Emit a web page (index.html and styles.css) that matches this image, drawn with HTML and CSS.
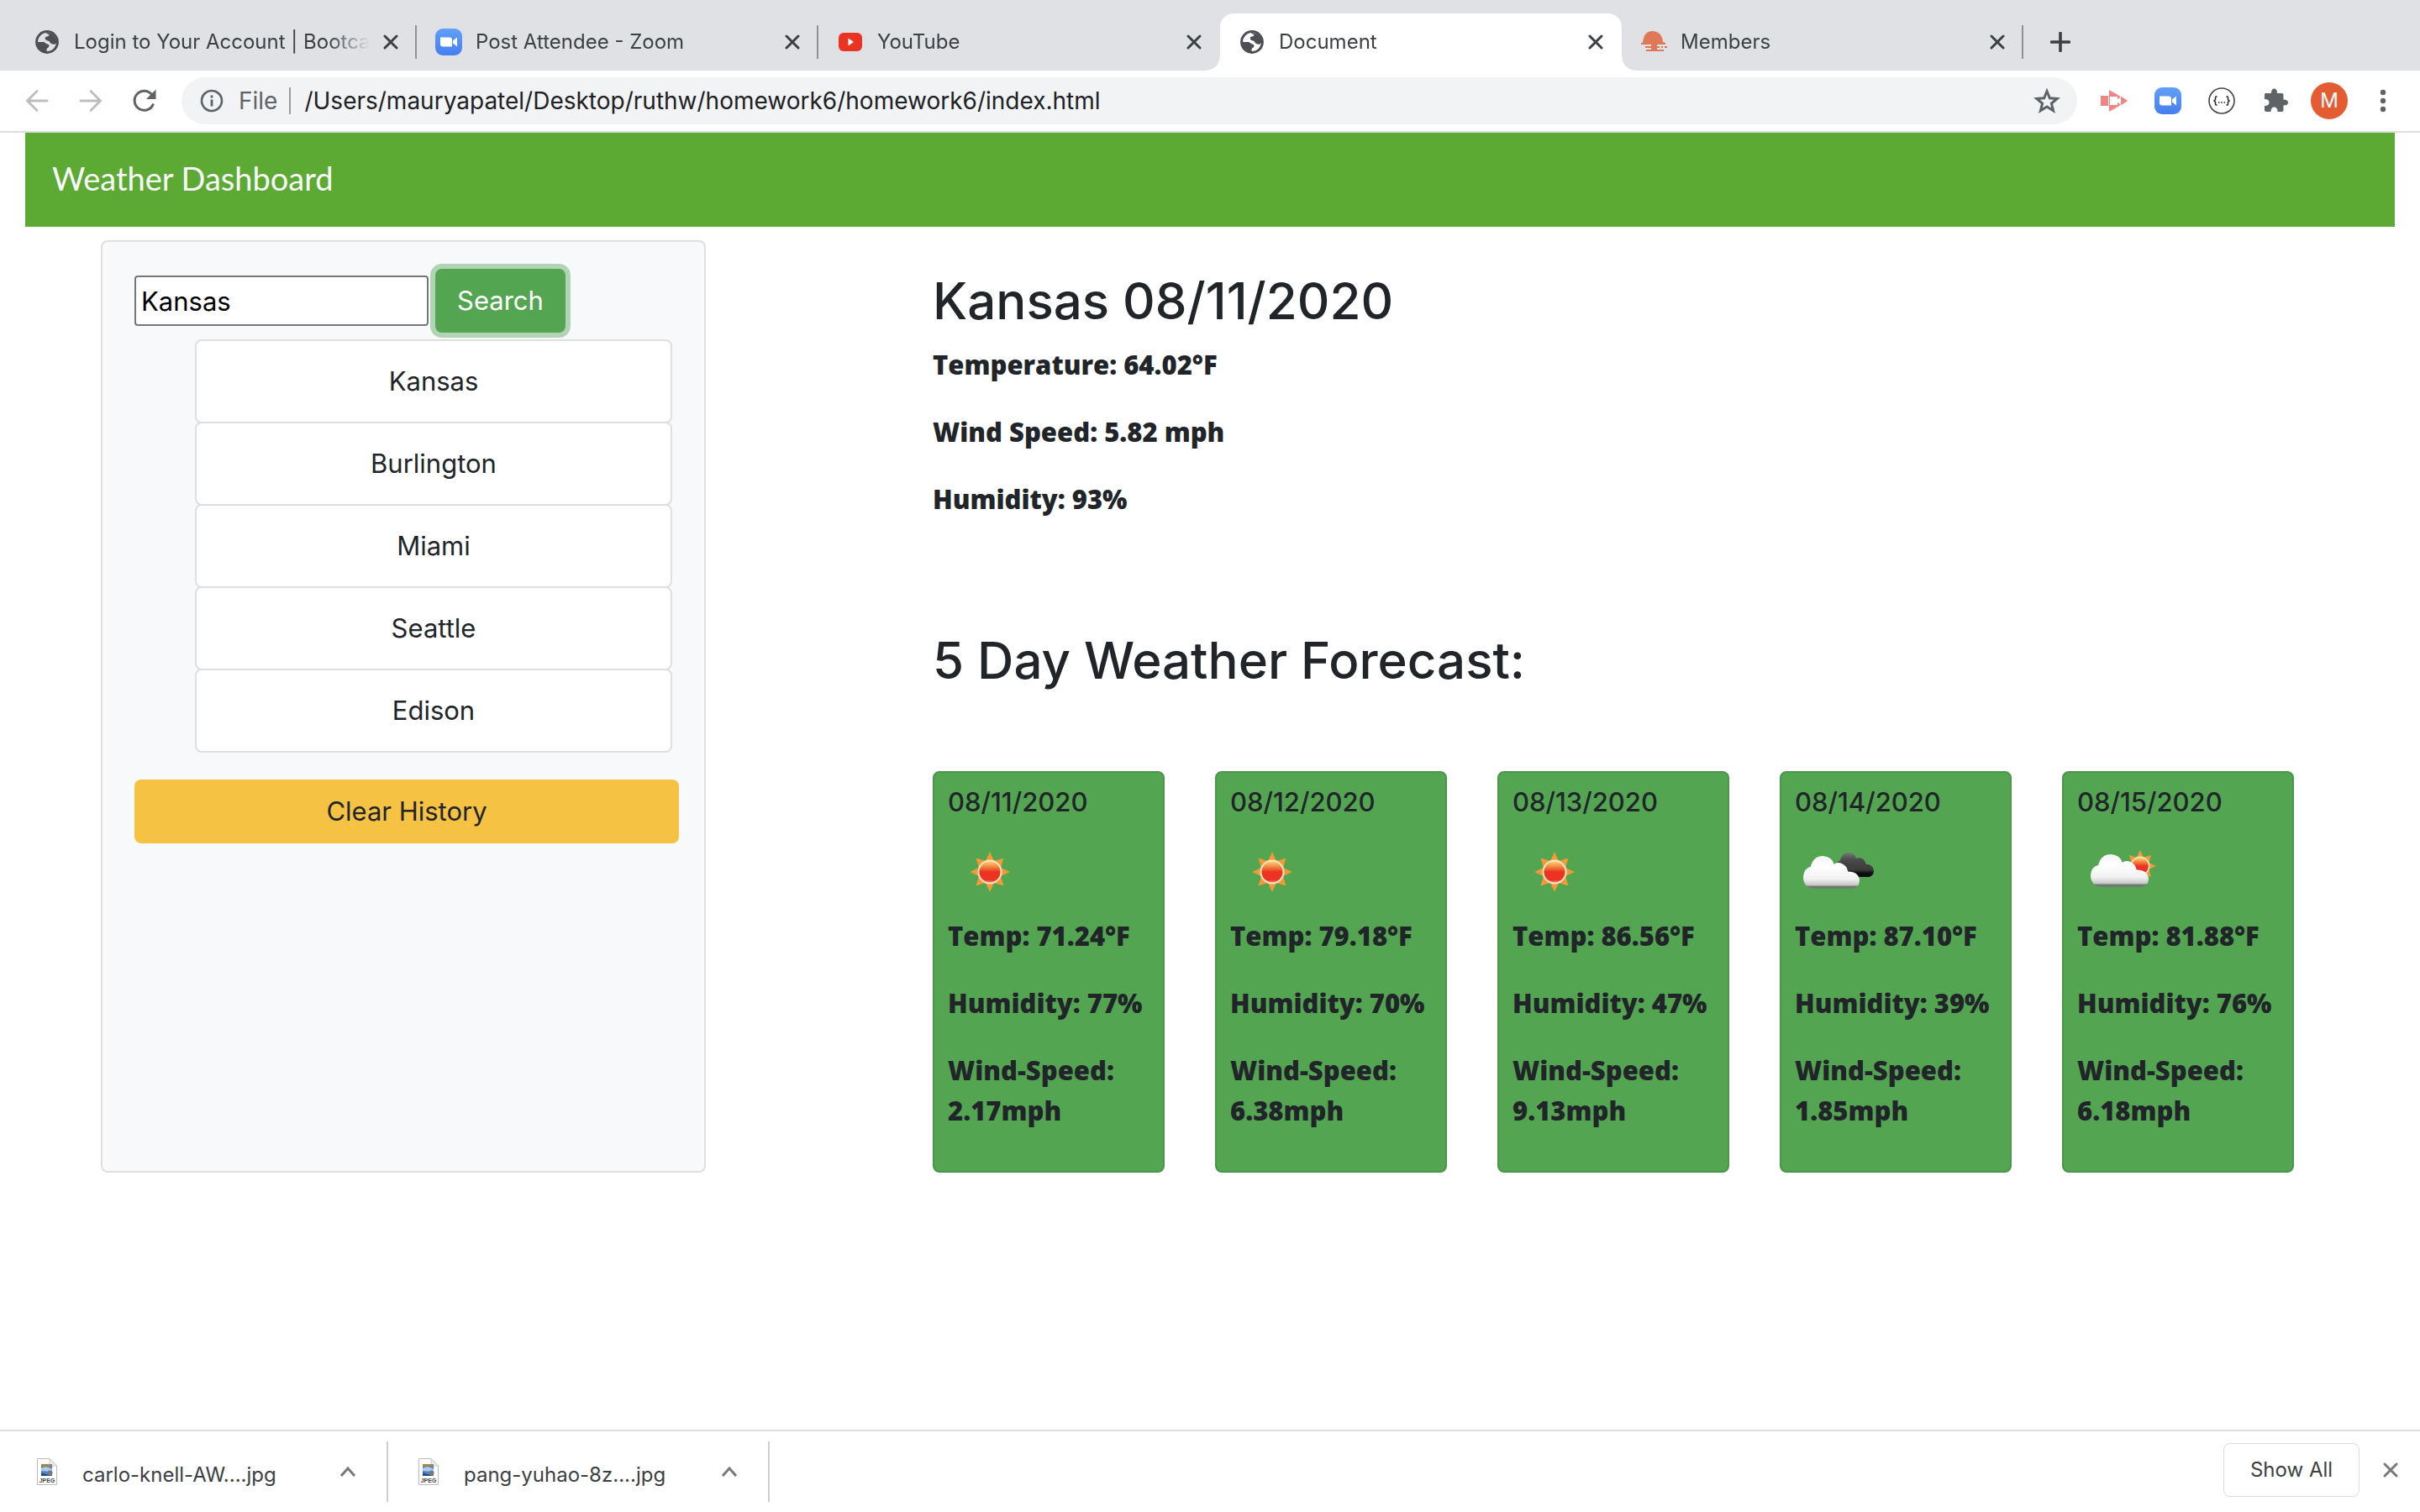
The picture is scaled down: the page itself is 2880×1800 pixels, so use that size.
FILE: index.html
```html
<!DOCTYPE html>
<html lang="en">
<head>
<meta charset="utf-8">
<title>Document</title>
<link rel="stylesheet" href="styles.css">
</head>
<body>
<svg class="defs" aria-hidden="true">
  <defs>
    <linearGradient id="zoomBlue" x1="0" y1="0" x2="0" y2="1"><stop offset="0" stop-color="#61a0f8"/><stop offset="1" stop-color="#467ef0"/></linearGradient>
    <linearGradient id="sunCore" x1="0" y1="0" x2="0" y2="1"><stop offset="0" stop-color="#fbe27a"/><stop offset=".4" stop-color="#ee5a2a"/><stop offset=".5" stop-color="#eb3223"/><stop offset=".85" stop-color="#eb3223"/><stop offset="1" stop-color="#f49a9a"/></linearGradient>
    <linearGradient id="whiteCloud" x1="0" y1="0" x2="0" y2="1"><stop offset="0" stop-color="#f4f4f4"/><stop offset=".3" stop-color="#fff"/><stop offset=".7" stop-color="#f1f1f1"/><stop offset=".9" stop-color="#c6c6c6"/><stop offset=".92" stop-color="#6f7a70"/><stop offset="1" stop-color="#6f7a70"/></linearGradient>
    <linearGradient id="darkCloud" x1="0" y1="0" x2="0" y2="1"><stop offset="0" stop-color="#777"/><stop offset=".3" stop-color="#4a4a4a"/><stop offset=".7" stop-color="#3c3c3c"/><stop offset=".85" stop-color="#0c0c0c"/><stop offset="1" stop-color="#0c0c0c"/></linearGradient>
    <symbol id="globe" viewBox="0 0 28 28"><circle cx="14" cy="14" r="12.4" fill="none" stroke="#4d4f54" stroke-width="3"/><path fill="#4d4f54" d="M13 3.500C17 2 24 5 25.500 13C25 18 21 17 19 16C17 15 17.500 13 15 12.500C12.500 12 11 10.500 12 8.500C13 7 15.500 8 16.500 6C16.500 4.500 14 5 13 3.500ZM2 14H9C12 14 12 16 14.500 16.500C16.500 17 17 18 16 20C15 21.500 13.500 21 13.500 23V26C7 26 2 21 2 14Z"/></symbol>
    <symbol id="camera" viewBox="0 0 32 32"><rect width="32" height="32" rx="9" fill="url(#zoomBlue)"/><path fill="#fff" d="M6 10.500h11q3 0 3 3V21.500H9q-3 0-3-3ZM21 14.500l5-4V21.500l-5-4Z"/></symbol>
    <symbol id="cross" viewBox="0 0 18 18"><path d="M2 2L16 16M16 2L2 16" fill="none" stroke="currentColor" stroke-width="3" stroke-linecap="round"/></symbol>
    <symbol id="caret" viewBox="0 0 20 14"><path d="M2 12L10 3L18 12" fill="none" stroke="currentColor" stroke-width="3"/></symbol>
    <symbol id="jpeg" viewBox="0 0 24 32"><path d="M.5.500H15L23.500 9V31.500H.5Z" fill="#fff" stroke="#bbb"/><path d="M15 .500V9H23.500Z" fill="#ececec" stroke="#ccc"/><path d="M5 7h13v14H5Z" fill="#4f86c9"/><path d="M5 7h12v3H5Z" fill="#a98245"/><path d="M5 12q6-4 13 1v3l-13-1Z" fill="#a9cdf0"/><path d="M5 17l13 4H5Z" fill="#284d85"/><circle cx="15.500" cy="17.500" r="3" fill="#77797c"/><text x="12" y="29" text-anchor="middle" font-family="Liberation Sans, sans-serif" font-weight="700" font-size="7" fill="#444">JPEG</text></symbol>
    <symbol id="sun" viewBox="-24 -24 48 48"><path fill="#f29a38" d="M0-24L5-13L16.500-16.500L13-5L24 0L13 5L16.500 16.500L5 13L0 24L-5 13L-16.500 16.500L-13 5L-24 0L-13-5L-16.500-16.500L-5-13Z"/><circle r="13.500" fill="url(#sunCore)" stroke="#fbe3bd" stroke-width="2"/></symbol>
    <symbol id="cloud" viewBox="0 0 68 40" preserveAspectRatio="none"><path d="M12 40Q0 38 0 25Q1 15 9 13Q12 0 24 0Q35 1 37 10Q41 7 46 9Q53 12 54 19Q67 19 68 30Q68 38 60 40Z"/></symbol>
  </defs>
</svg>

<header class="browser">
  <div class="tabs">
    <div class="tab">
      <svg class="tab-icon"><use href="#globe"/></svg>
      <span class="tab-title">Login to Your Account | Bootca</span>
      <button class="tab-close" aria-label="Close tab"><svg class="cross"><use href="#cross"/></svg></button>
    </div>
    <div class="tab">
      <svg class="tab-icon tab-icon-large"><use href="#camera"/></svg>
      <span class="tab-title">Post Attendee - Zoom</span>
      <button class="tab-close" aria-label="Close tab"><svg class="cross"><use href="#cross"/></svg></button>
    </div>
    <div class="tab tab-before-active">
      <svg class="tab-icon" viewBox="0 0 28 28"><rect y="3" width="28" height="22" rx="6" fill="#ea3323"/><path d="M11.500 9.500v9L18 14Z" fill="#fff"/></svg>
      <span class="tab-title">YouTube</span>
      <button class="tab-close" aria-label="Close tab"><svg class="cross"><use href="#cross"/></svg></button>
    </div>
    <div class="tab tab-active">
      <svg class="tab-icon"><use href="#globe"/></svg>
      <span class="tab-title">Document</span>
      <button class="tab-close" aria-label="Close tab"><svg class="cross"><use href="#cross"/></svg></button>
    </div>
    <div class="tab">
      <svg class="tab-icon tab-icon-large" viewBox="0 0 32 32"><path fill="#df7856" d="M3 17Q4 3 15 3Q26 4 27 16L30 17V19H20V21H23V23H20V25H28V27H7V25H13V23H6V21H13V19H1V17ZM25 21h2v2h-2ZM29 21h3v2h-3Z"/></svg>
      <span class="tab-title">Members</span>
      <button class="tab-close" aria-label="Close tab"><svg class="cross"><use href="#cross"/></svg></button>
    </div>
    <button class="new-tab" aria-label="New tab"><svg class="plus" viewBox="0 0 24 24"><path d="M12 1.500V22.500M1.500 12H22.500" stroke="currentColor" stroke-width="3.600" stroke-linecap="round"/></svg></button>
  </div>
  <div class="toolbar">
    <button class="tool tool-disabled" aria-label="Back"><svg viewBox="0 0 32 32"><path d="M28 16H5M16 4.500L4.500 16L16 27.500" fill="none" stroke="currentColor" stroke-width="2.800" stroke-linecap="round"/></svg></button>
    <button class="tool tool-disabled" aria-label="Forward"><svg viewBox="0 0 32 32"><path d="M4 16H27M16 4.500L27.500 16L16 27.500" fill="none" stroke="currentColor" stroke-width="2.800" stroke-linecap="round"/></svg></button>
    <button class="tool" aria-label="Reload"><svg viewBox="0 0 32 32"><path d="M26.500 19.500A11.500 11.500 0 1 1 24.500 8.500" fill="none" stroke="currentColor" stroke-width="3"/><path d="M29.500 2.500V14H18Z" fill="currentColor"/></svg></button>
    <div class="address">
      <svg class="info" viewBox="0 0 28 28"><circle cx="14" cy="14" r="12" fill="none" stroke="#5f6368" stroke-width="2.600"/><path d="M12.600 12.500h2.800v8h-2.800ZM12.600 7.500h2.800v3h-2.800Z" fill="#5f6368"/></svg>
      <label class="scheme" for="url">File</label>
      <input class="url" id="url" type="text" value="/Users/mauryapatel/Desktop/ruthw/homework6/homework6/index.html">
      <button class="star" aria-label="Bookmark"><svg viewBox="0 0 32 32"><path d="M16 4.500L19.300 12.800L28.200 13.400L21.400 19.100L23.600 27.800L16 23L8.400 27.800L10.600 19.100L3.800 13.400L12.700 12.800Z" fill="none" stroke="#5f6368" stroke-width="3"/></svg></button>
    </div>
    <div class="extensions">
      <button class="tool" aria-label="Screencast"><svg viewBox="0 0 32 32"><path d="M0 10H9V22H0ZM10 3L23 10.500V12L20 14.500V11H11V21H20V17.500L23 20V21.500L10 29ZM24 10.500L32 16L24 21.500Z" fill="#f08583"/></svg></button>
      <button class="tool" aria-label="Zoom"><svg><use href="#camera"/></svg></button>
      <button class="tool" aria-label="JSON formatter"><svg viewBox="0 0 32 32"><circle cx="16" cy="16" r="15" fill="#fff" stroke="#444" stroke-width="1.600"/><path d="M10.500 11H9.500Q8.500 11 8.500 12.500V14.500L7 16L8.500 17.500V19.500Q8.500 21 9.500 21H10.500M21.500 11H22.500Q23.500 11 23.500 12.500V14.500L25 16L23.500 17.500V19.500Q23.500 21 22.500 21H21.500" fill="none" stroke="#222" stroke-width="1.500"/><path d="M12 18h1.500M15.300 18h1.500M18.600 18h1.500" stroke="#222" stroke-width="1.500"/></svg></button>
      <button class="tool" aria-label="Extensions"><svg viewBox="0 0 32 32"><path fill="#5f6368" d="M4 7H11Q11 1.500 14.500 1.500Q18 1.500 18 7H23.500Q25.500 7 25.500 9V14.500Q31 14.500 31 18Q31 21.500 25.500 21.500V27Q25.500 29 23.500 29H18.500Q18.500 23.500 14.500 23.500Q10.500 23.500 10.500 29H5Q3 29 3 27V22Q8.500 22 8.500 18Q8.500 14 3 14V9Q3 7 4 7Z"/></svg></button>
      <button class="avatar" aria-label="Profile M">M</button>
      <button class="tool" aria-label="Menu"><svg viewBox="0 0 32 32" fill="#5f6368"><circle cx="16" cy="6" r="3.200"/><circle cx="16" cy="16" r="3.200"/><circle cx="16" cy="26" r="3.200"/></svg></button>
    </div>
  </div>
</header>

<nav class="banner"><h1 class="brand">Weather Dashboard</h1></nav>

<div class="dashboard">
  <aside class="sidebar">
    <form class="search">
      <input class="search-box" type="text" value="Kansas" aria-label="City">
      <button class="search-button" type="button">Search</button>
    </form>
    <ul class="history">
      <li class="city">Kansas</li>
      <li class="city">Burlington</li>
      <li class="city">Miami</li>
      <li class="city">Seattle</li>
      <li class="city">Edison</li>
    </ul>
    <button class="clear" type="button">Clear History</button>
  </aside>

  <main class="weather">
    <h2 class="heading">Kansas 08/11/2020</h2>
    <div class="current">
      <p class="reading">Temperature: 64.02°F</p>
      <p class="reading">Wind Speed: 5.82 mph</p>
      <p class="reading">Humidity: 93%</p>
    </div>
    <h2 class="heading">5 Day Weather Forecast:</h2>
    <div class="forecast">
      <article class="day">
        <h3 class="date">08/11/2020</h3>
        <svg class="sky" viewBox="0 0 100 100"><use href="#sun" x="26" y="24" width="48" height="48"/></svg>
        <p class="reading">Temp: 71.24°F</p>
        <p class="reading">Humidity: 77%</p>
        <p class="reading">Wind-Speed: 2.17mph</p>
      </article>
      <article class="day">
        <h3 class="date">08/12/2020</h3>
        <svg class="sky" viewBox="0 0 100 100"><use href="#sun" x="26" y="24" width="48" height="48"/></svg>
        <p class="reading">Temp: 79.18°F</p>
        <p class="reading">Humidity: 70%</p>
        <p class="reading">Wind-Speed: 6.38mph</p>
      </article>
      <article class="day">
        <h3 class="date">08/13/2020</h3>
        <svg class="sky" viewBox="0 0 100 100"><use href="#sun" x="26" y="24" width="48" height="48"/></svg>
        <p class="reading">Temp: 86.56°F</p>
        <p class="reading">Humidity: 47%</p>
        <p class="reading">Wind-Speed: 9.13mph</p>
      </article>
      <article class="day">
        <h3 class="date">08/14/2020</h3>
        <svg class="sky" viewBox="0 0 100 100"><use href="#cloud" x="48" y="25" width="46" height="29" fill="url(#darkCloud)"/><use href="#cloud" x="10" y="29" width="67" height="39" fill="url(#whiteCloud)"/></svg>
        <p class="reading">Temp: 87.10°F</p>
        <p class="reading">Humidity: 39%</p>
        <p class="reading">Wind-Speed: 1.85mph</p>
      </article>
      <article class="day">
        <h3 class="date">08/15/2020</h3>
        <svg class="sky" viewBox="0 0 100 100"><use href="#sun" x="56" y="22" width="38" height="38"/><use href="#cloud" x="16" y="27" width="69" height="39" fill="url(#whiteCloud)"/></svg>
        <p class="reading">Temp: 81.88°F</p>
        <p class="reading">Humidity: 76%</p>
        <p class="reading">Wind-Speed: 6.18mph</p>
      </article>
    </div>
  </main>
</div>

<footer class="downloads">
  <div class="download">
    <svg class="file-icon"><use href="#jpeg"/></svg>
    <a class="file-name" href="#">carlo-knell-AW....jpg</a>
    <button class="file-menu" aria-label="Options"><svg class="caret"><use href="#caret"/></svg></button>
  </div>
  <div class="download">
    <svg class="file-icon"><use href="#jpeg"/></svg>
    <a class="file-name" href="#">pang-yuhao-8z....jpg</a>
    <button class="file-menu" aria-label="Options"><svg class="caret"><use href="#caret"/></svg></button>
  </div>
  <div class="download-actions">
    <button class="show-all">Show All</button>
    <button class="dismiss" aria-label="Close downloads"><svg class="cross"><use href="#cross"/></svg></button>
  </div>
</footer>
</body>
</html>
```

FILE: styles.css
```css
*, *::before, *::after { box-sizing: border-box; }

body {
  display: flex;
  flex-direction: column;
  min-height: 100vh;
  margin: 0;
  background: #fff;
  color: #212529;
  font: 400 31px/48px Inter, "Liberation Sans", sans-serif;
}

h1, h2, h3, p, ul { margin: 0; padding: 0; }
button, input { font: inherit; color: inherit; }
button { display: flex; align-items: center; justify-content: center; padding: 0; border: 0; background: none; }
svg { display: block; flex: none; }
.defs { position: absolute; width: 0; height: 0; }

/* Browser chrome */
.tabs {
  display: flex;
  align-items: flex-end;
  height: 84px;
  padding-left: 18px;
  background: #dfe1e5;
  color: #3c4043;
  font-size: 24px;
}
.tab {
  position: relative;
  display: flex;
  align-items: center;
  flex: 0 1 478px;
  min-width: 0;
  height: 68px;
  padding: 0 22px 0 24px;
}
.tab::after {
  content: "";
  position: absolute;
  right: 0;
  width: 2px;
  height: 40px;
  background: #909297;
}
.tab-before-active::after { display: none; }
.tab-icon { width: 28px; height: 28px; margin-right: 18px; }
.tab-icon-large { width: 32px; height: 32px; margin: 0 16px 0 -2px; }
.tab-title {
  flex: 1;
  min-width: 0;
  overflow: hidden;
  white-space: nowrap;
  mask-image: linear-gradient(to right, #000 86%, transparent);
}
.tab-close { width: 18px; margin-left: 16px; }
.cross { width: 18px; height: 18px; }
.tab-active { border-radius: 16px 16px 0 0; background: #fff; }
.tab-active::before, .tab-active::after {
  content: "";
  position: absolute;
  bottom: 0;
  width: 16px;
  height: 16px;
}
.tab-active::before { left: -16px; background: radial-gradient(circle at 0 0, transparent 15px, #fff 16px); }
.tab-active::after { right: -16px; background: radial-gradient(circle at 100% 0, transparent 15px, #fff 16px); }
.new-tab { align-self: center; width: 24px; margin: 16px 0 0 32px; }
.plus { width: 24px; height: 24px; }

.toolbar {
  display: flex;
  align-items: center;
  height: 74px;
  padding: 0 28px;
  border-bottom: 2px solid #dcdde1;
  color: #5f6368;
}
.tool { width: 32px; margin-right: 32px; }
.tool svg, .star svg { width: 32px; height: 32px; }
.tool-disabled { color: #bbbdc0; }
.address {
  display: flex;
  align-items: center;
  flex: 1;
  height: 56px;
  margin: 0 28px 0 -4px;
  padding: 0 20px 0 22px;
  border-radius: 28px;
  background: #f1f3f4;
  font-size: 28px;
}
.info { width: 28px; height: 28px; }
.scheme { margin: 0 14px 0 18px; }
.url {
  flex: 1;
  height: 32px;
  padding: 0 0 0 16px;
  border: 0;
  border-left: 2px solid #9a9ca0;
  background: none;
  color: #202124;
}
.extensions { display: flex; align-items: center; }
.extensions .tool:last-child { margin-right: 0; }
.avatar {
  width: 44px;
  height: 44px;
  margin: 0 26px 0 -6px;
  border-radius: 50%;
  background: #e35c32;
  color: #fff;
  font-size: 24px;
}

/* Dashboard */
.banner { margin: 0 30px; padding: 30px 32px 34px; background: #5caa33; }
.brand { color: #f8f9fa; font: 400 38px/48px Lato, sans-serif; }

.dashboard { display: flex; gap: 270px; padding: 16px 150px 32px 120px; }
.sidebar {
  flex: none;
  width: 25vw;
  padding: 32px 30px 32px 38px;
  border: 2px solid #dfdfdf;
  border-radius: 8px;
  background: #f8f9fb;
}
.search { display: flex; align-items: center; gap: 8px; }
.search-box {
  width: 350px;
  height: 60px;
  padding: 2px 6px;
  border: 2px solid #767676;
  border-radius: 4px;
  background: #fff;
  color: #000;
}
.search-button {
  padding: 14px 26px;
  border-radius: 8px;
  background: #53a551;
  box-shadow: 0 0 0 6px #b1d5b4;
  color: #fff;
}
.history { margin: 8px 8px 32px 72px; list-style: none; }
.city {
  padding: 24px 0;
  border: 2px solid #dfdfdf;
  border-radius: 8px;
  background: #fff;
  text-align: center;
}
.city + .city { margin-top: -2px; }
.clear { width: 100%; padding: 14px; border-radius: 8px; background: #f6c244; }

.weather { flex: 1; min-width: 0; padding-top: 34px; }
.heading { font-weight: 500; font-size: 60px; line-height: 76px; }
.current { padding: 14px 0 98px; }
.reading { margin-bottom: 32px; font: 800 31px/48px "Open Sans", sans-serif; }
.forecast { display: flex; gap: 60px; padding-top: 94px; }
.day {
  flex: 1;
  min-width: 0;
  padding: 16px;
  border: 2px solid #4b964a;
  border-radius: 8px;
  background: #53a551;
}
.date { margin-bottom: 16px; font-weight: 500; font-size: 31px; line-height: 38px; }
.sky { width: 100px; height: 100px; }

/* Downloads */
.downloads {
  display: flex;
  align-items: center;
  height: 98px;
  margin-top: auto;
  padding: 0 26px 0 8px;
  border-top: 2px solid #dcdde1;
  color: #3c4043;
  font-size: 24px;
}
.download {
  display: flex;
  align-items: center;
  width: 454px;
  height: 72px;
  padding: 0 36px;
  border-right: 2px solid #cfd0d2;
}
.file-icon { width: 24px; height: 32px; }
.file-name { flex: 1; margin-left: 30px; padding-top: 8px; color: inherit; text-decoration: none; line-height: 32px; }
.file-menu, .dismiss { color: #77797c; }
.caret { width: 20px; height: 14px; }
.download-actions { display: flex; align-items: center; gap: 28px; margin-left: auto; padding-bottom: 4px; }
.show-all {
  width: 162px;
  height: 64px;
  border: 1px solid #dadce0;
  border-radius: 8px;
}
```
